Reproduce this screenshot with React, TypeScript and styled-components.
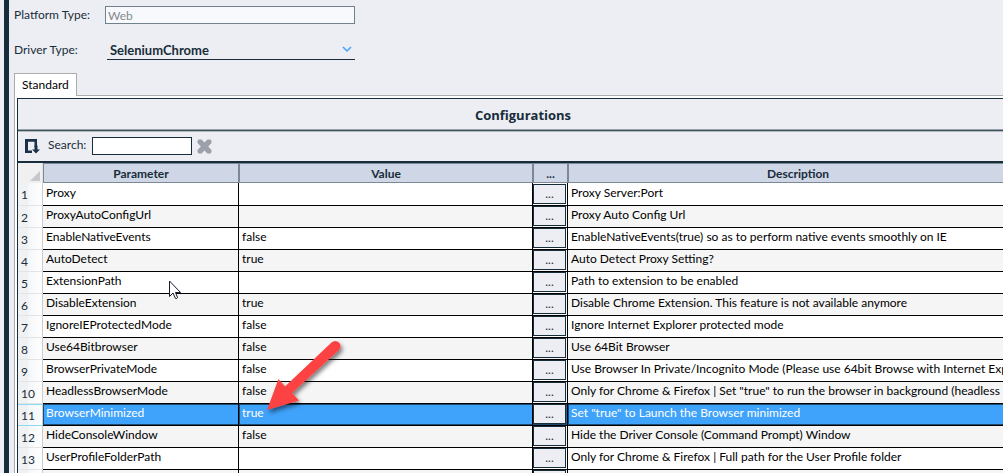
import React from "react";
import styled, { createGlobalStyle, css } from "styled-components";

const ink = "#182d3a";

const GlobalStyle = createGlobalStyle`
  *, *::before, *::after { box-sizing: border-box; }
  body {
    margin: 0;
    background: #edeef3;
    color: ${ink};
    font-family: Lato, "Open Sans", sans-serif;
    font-size: 12px;
    line-height: 16px;
  }
  input, select, button { font: inherit; color: inherit; margin: 0; border-radius: 0; }
`;

const Page = styled.main`
  position: relative;
  height: 100vh;
  overflow: hidden;
  margin-left: 4px;
  padding-left: 5px;
  border-left: 5px solid ${ink};
`;

const FieldRow = styled.div`
  display: flex;
  align-items: center;
  height: 18px;
  margin-top: ${(p: { $top: number }) => p.$top}px;
`;

const FieldLabel = styled.label`
  width: 91px;
  flex: none;
`;

const ReadonlyInput = styled.input`
  width: 250px;
  height: 18px;
  padding: 0 2px;
  border: 1px solid #72828c;
  background: #f7f9fd;
  &:disabled { color: #84888e; }
`;

const SelectWrap = styled.div`
  display: grid;
  align-items: center;
  width: 248px;
  margin-left: 2px;
  border-bottom: 1px solid ${ink};
  > * { grid-area: 1 / 1; }
`;

const Select = styled.select`
  appearance: none;
  width: 100%;
  height: 18px;
  padding: 0 20px 0 3px;
  border: 0;
  background: transparent;
  font-size: 13px;
  font-weight: 700;
`;

const Chevron = styled.svg`
  justify-self: end;
  margin-right: 3px;
  pointer-events: none;
`;

const Tab = styled.button`
  display: block;
  height: 23px;
  margin: 14px 0 -1px;
  padding: 0 7px;
  border: 1px solid #acacac;
  border-bottom: 0;
  background: #fff;
  position: relative;
  color: #000;
`;

const TabPanel = styled.section`
  margin-right: -27px;
  padding: 2px 0 0 2px;
  border: 1px solid #acacac;
  background: #fff;
`;

const Grid = styled.div`
  border: 1px solid ${ink};
  background: #edeef3;
`;

const Title = styled.h1`
  margin: 0;
  height: 30px;
  padding-top: 1px;
  font-family: "Open Sans", sans-serif;
  font-size: 13px;
  line-height: 30px;
  text-align: center;
`;

const Toolbar = styled.div`
  display: flex;
  align-items: center;
  height: 34px;
  padding-left: 7px;
  border-bottom: 2px solid ${ink};
  background: linear-gradient(#97a1a9 0 1px, #3f525e 1px 2px, #b4bac1 2px 3px, transparent 3px);
`;

const IconButton = styled.button`
  display: flex;
  padding: 2px 0 0;
  border: 0;
  background: none;
`;

const SearchLabel = styled.label`
  width: 44px;
  margin-left: 7px;
`;

const SearchInput = styled.input`
  width: 100px;
  height: 18px;
  margin: 2px 5px 0 0;
  padding: 0 2px;
  border: 1px solid ${ink};
  background: #fff;
`;

const Table = styled.table`
  width: 100%;
  table-layout: fixed;
  border-collapse: separate;
  border-spacing: 0;
  color: #000;
`;

const Col = styled.col`
  width: ${(p: { $w?: number }) => (p.$w ? `${p.$w}px` : "auto")};
`;

const HeadCell = styled.th`
  height: 20px;
  padding: 2px 0 0;
  border: 1px solid #7b8996;
  background: #cfd6e6;
  color: ${ink};
  line-height: 16px;
`;

const CornerCell = styled.th`
  padding: 0;
  background: #f0f0f0;
  vertical-align: bottom;
  border-right: 1px solid #e2e2e2;
  svg { display: block; margin: 0 0 2px 12px; }
`;

const RowHeader = styled.th`
  height: 22px;
  padding: 2px 0 0 3px;
  border-right: 1px solid #c9ccd0;
  border-bottom: 1px solid #e2e4e6;
  background: linear-gradient(90deg, #f0f1f2 0 10px, #f5f6f9 10px, #fff);
  color: ${ink};
  font-weight: 400;
  text-align: left;
  line-height: 18px;
`;

const Cell = styled.td`
  height: 22px;
  padding: 0 3px;
  border-right: 1px solid #000;
  border-bottom: 1px solid #000;
  line-height: 18px;
  vertical-align: top;
  white-space: nowrap;
  overflow: hidden;
`;

const ButtonCell = styled(Cell)`
  padding: 0 1px 0 0;
  vertical-align: bottom;
`;

const MoreButton = styled.button`
  display: block;
  width: 100%;
  height: 20px;
  margin-bottom: 1px;
  padding: 0;
  border: 1px solid ${ink};
  background: #edeef3;
  color: ${ink};
  line-height: 18px;
`;

const Row = styled.tr<{ $selected: boolean }>`
  background: #fff;
  &:nth-child(even) { background: #f5f5f5; }
  &:first-child > * { height: 23px; }
  &:first-child > ${Cell} { padding-top: 1px; }
  ${(p) =>
    p.$selected &&
    css`
      &&& { background: #3fa2fb; color: #fff; }
      ${Cell} { box-shadow: inset 0 1px #1d4a70, inset 0 -1px #1d4a70, inset 1px 0 #1d4a70; }
      ${ButtonCell} { background: #1f659f; }
      ${RowHeader} {
        border-bottom-color: #8fd8f5;
        box-shadow: inset 0 1px #8fd8f5;
        background: linear-gradient(90deg, #eef0f2 0 10px, #f4f8fb 10px, #fafcfd);
      }
    `}
`;

const Overlay = styled.svg`
  position: absolute;
  left: ${(p: { $x: number; $y: number }) => p.$x}px;
  top: ${(p: { $x: number; $y: number }) => p.$y}px;
  pointer-events: none;
`;

const rows: [string, string, string][] = [
  ["Proxy", "", "Proxy Server:Port"],
  ["ProxyAutoConfigUrl", "", "Proxy Auto Config Url"],
  ["EnableNativeEvents", "false", "EnableNativeEvents(true) so as to perform native events smoothly on IE"],
  ["AutoDetect", "true", "Auto Detect Proxy Setting?"],
  ["ExtensionPath", "", "Path to extension to be enabled"],
  ["DisableExtension", "true", "Disable Chrome Extension. This feature is not available anymore"],
  ["IgnoreIEProtectedMode", "false", "Ignore Internet Explorer protected mode"],
  ["Use64Bitbrowser", "false", "Use 64Bit Browser"],
  ["BrowserPrivateMode", "false", "Use Browser In Private/Incognito Mode (Please use 64bit Browse with Internet Exp"],
  ["HeadlessBrowserMode", "false", "Only for Chrome & Firefox | Set \"true\" to run the browser in background (headless"],
  ["BrowserMinimized", "true", "Set \"true\" to Launch the Browser minimized"],
  ["HideConsoleWindow", "false", "Hide the Driver Console (Command Prompt) Window"],
  ["UserProfileFolderPath", "", "Only for Chrome & Firefox | Full path for the User Profile folder"],
];

export default function App() {
  return (
    <>
      <GlobalStyle />
      <Page>
        <FieldRow $top={6}>
          <FieldLabel htmlFor="platform">Platform Type:</FieldLabel>
          <ReadonlyInput id="platform" value="Web" disabled />
        </FieldRow>
        <FieldRow $top={17}>
          <FieldLabel htmlFor="driver">Driver Type:</FieldLabel>
          <SelectWrap>
            <Select id="driver" defaultValue="SeleniumChrome">
              <option>SeleniumChrome</option>
            </Select>
            <Chevron width="10" height="7" viewBox="0 0 10 7" fill="none" stroke="#3fa2fb" strokeWidth="1.5">
              <path d="M1 1l4 4 4-4" />
            </Chevron>
          </SelectWrap>
        </FieldRow>

        <Tab role="tab" aria-selected="true">Standard</Tab>
        <TabPanel>
          <Grid>
            <Title>Configurations</Title>
            <Toolbar>
              <IconButton aria-label="Reset columns">
                <svg width="16" height="15" viewBox="0 0 16 15">
                  <path d="M0 0h12v8h-2.500V2.800H3v8.700h4V14H0z" fill="#1c3048" />
                  <path d="M9.500 6.500h3v4H15L11 14.500 7 10.500h2.500z" fill="#1c3048" />
                </svg>
              </IconButton>
              <SearchLabel htmlFor="search">Search:</SearchLabel>
              <SearchInput id="search" />
              <IconButton aria-label="Clear search">
                <svg width="15" height="15" viewBox="0 0 15 15">
                  <path
                    d="M1.500 0.500H4.500L7.500 3.500 10.500 0.500H13.500L14.500 2V4L11.200 7.500 14.500 11V13L13.500 14.500H10.500L7.500 11.500 4.500 14.500H1.500L0.500 13V11L3.800 7.500 0.500 4V2z"
                    fill="#9ba0aa"
                  />
                </svg>
              </IconButton>
            </Toolbar>
            <Table>
              <colgroup>
                <Col $w={25} />
                <Col $w={196} />
                <Col $w={294} />
                <Col $w={35} />
                <Col />
              </colgroup>
              <thead>
                <tr>
                  <CornerCell>
                    <svg width="10" height="10" viewBox="0 0 10 10">
                      <path d="M10 0v10H0z" fill="#c6c8cb" />
                    </svg>
                  </CornerCell>
                  <HeadCell>Parameter</HeadCell>
                  <HeadCell>Value</HeadCell>
                  <HeadCell>...</HeadCell>
                  <HeadCell>Description</HeadCell>
                </tr>
              </thead>
              <tbody>
                {rows.concat([["", "", ""]]).map(([name, value, description], i) => (
                  <Row key={i} $selected={name === "BrowserMinimized"}>
                    <RowHeader>{name && i + 1}</RowHeader>
                    <Cell>{name}</Cell>
                    <Cell>{value}</Cell>
                    <ButtonCell>
                      <MoreButton>{name && "..."}</MoreButton>
                    </ButtonCell>
                    <Cell>{description}</Cell>
                  </Row>
                ))}
              </tbody>
            </Table>
          </Grid>
        </TabPanel>

        <Overlay $x={159} $y={280} width="14" height="20" viewBox="0 0 14 20">
          <path
            d="M1.500 1v15.500l3.500-3.500 2.500 5.500q1.500 0.500 2-1L7.500 12.500h5z"
            fill="#fff"
            stroke="#1b1b2b"
            strokeWidth="1"
          />
        </Overlay>
        <Overlay $x={250} $y={330} width="90" height="90" viewBox="260 330 90 90">
          <defs>
            <filter id="shadow" x="-20%" y="-20%" width="150%" height="150%">
              <feDropShadow dx="2" dy="3" stdDeviation="2" floodColor="#000" floodOpacity="0.5" />
            </filter>
          </defs>
          <path
            d="M268 410L279.500 379l6.500 7.500L332.500 342.500a5 5 0 0 1 7.500 7.500L293 393l7 7.500z"
            fill="#fc4343"
            filter="url(#shadow)"
          />
        </Overlay>
      </Page>
    </>
  );
}
